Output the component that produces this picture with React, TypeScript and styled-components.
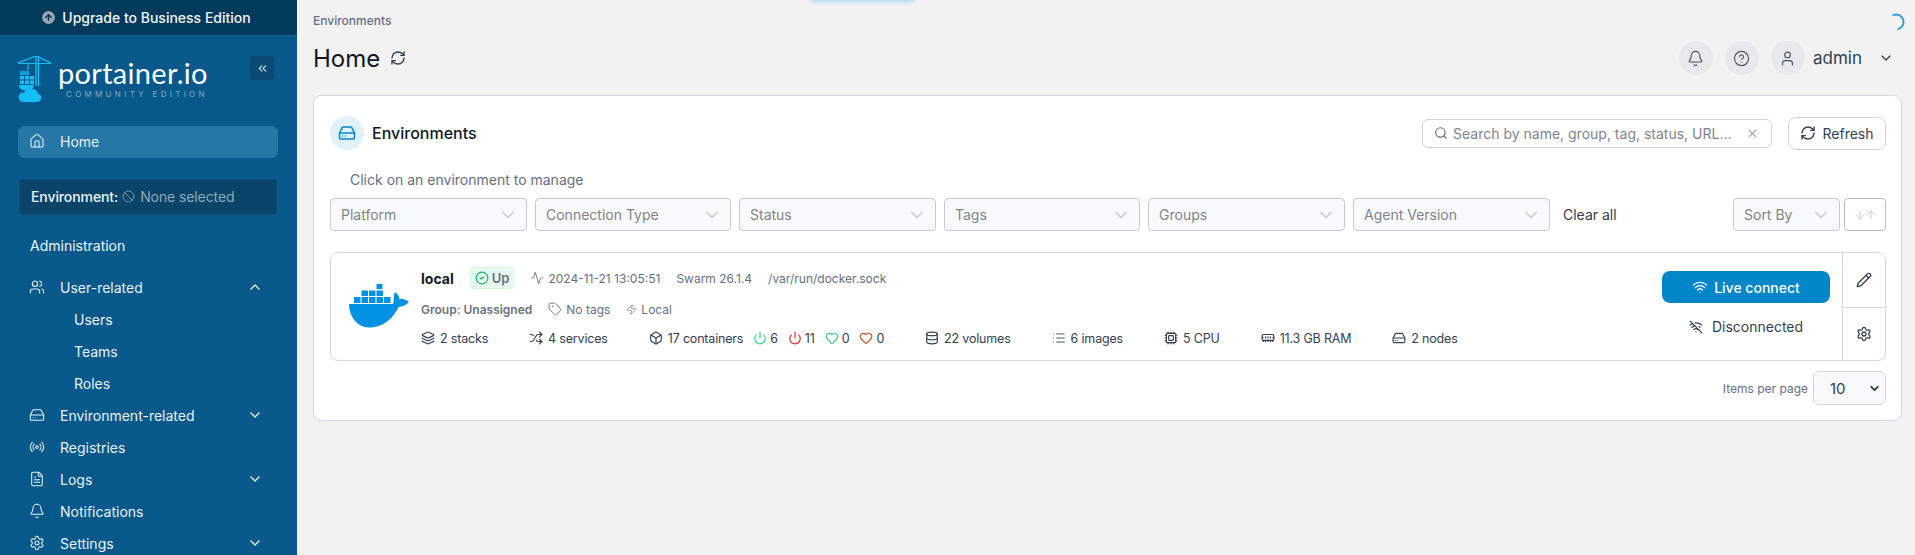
import type { FC, ReactNode } from "react";
import styled, { createGlobalStyle } from "styled-components";
import {
  Activity,
  ArrowDown,
  ArrowUp,
  ArrowUpCircle,
  Ban,
  Bell,
  Box,
  CheckCircle2,
  ChevronDown,
  ChevronUp,
  ChevronsLeft,
  Cpu,
  Database,
  FileText,
  HardDrive,
  Heart,
  HelpCircle,
  Home,
  Layers,
  List,
  MemoryStick,
  Pencil,
  Power,
  Radio,
  RefreshCw,
  Search,
  Settings,
  Shuffle,
  Tag,
  User,
  Users,
  Wifi,
  WifiOff,
  X,
  Zap,
} from "lucide-react";

const GlobalStyle = createGlobalStyle`
  html, body {
    margin: 0;
    height: 100%;
    overflow: hidden;
    background: #f2f2f2;
    font-family: Inter, "Liberation Sans", sans-serif;
    font-size: 14px;
    color: #344054;
  }
`;

const Page = styled.div`
  display: flex;
  height: 555px;
  overflow: hidden;
`;

const Sidebar = styled.aside`
  width: 297px;
  flex: none;
  height: 555px;
  overflow: hidden;
  background: #06598a;
  color: #eef5f9;
`;

const Banner = styled.div`
  height: 35px;
  display: flex;
  align-items: center;
  justify-content: center;
  gap: 5px;
  padding-right: 6px;
  background: #023a5c;
  border-bottom: 1px solid #0b6a9e;
  font-weight: 500;
  color: #f2f6f8;
`;

const LogoRow = styled.div`
  display: flex;
  justify-content: space-between;
  padding: 20px 23px 0 18px;
  height: 46px;
`;

const LogoMark = styled.div`
  display: flex;
  gap: 7px;
`;

const LogoWords = styled.div`
  display: flex;
  flex-direction: column;
  align-items: flex-start;
`;

const LogoName = styled.span`
  font-family: "Lato", sans-serif;
  font-size: 29px;
  line-height: 30px;
  margin-top: 2px;
  letter-spacing: 0.3px;
  color: #fff;
`;

const LogoEdition = styled.span`
  font-size: 8px;
  line-height: 8px;
  margin: 2px 0 0 8px;
  letter-spacing: 3.3px;
  white-space: nowrap;
  color: #8aa9bf;
`;

const CollapseButton = styled.div`
  width: 24px;
  height: 24px;
  border-radius: 3px;
  background: #0a4a73;
  display: flex;
  align-items: center;
  justify-content: center;
`;

const Nav = styled.nav`
  display: flex;
  flex-direction: column;
  padding: 24px 19px 0 18px;
`;

const NavRow = styled.div<{ $active?: boolean; $sub?: boolean }>`
  height: 32px;
  box-sizing: border-box;
  flex: none;
  display: flex;
  align-items: center;
  gap: 15px;
  padding: 0 15px 2px ${(p) => (p.$sub ? "56px" : "11px")};
  border-radius: 6px;
  background: ${(p) => (p.$active ? "#2577a5" : "transparent")};
  color: #e9f1f6;
  svg {
    flex: none;
  }
`;

const NavChevron = styled.span`
  margin-left: auto;
  display: flex;
`;

const EnvBox = styled.div`
  height: 36px;
  box-sizing: border-box;
  margin: 21px 1px 15px 1px;
  padding: 0 0 2px 11px;
  display: flex;
  align-items: center;
  gap: 4px;
  border: 1px dotted #0d5a88;
  border-radius: 3px;
  background: #0a4468;
  font-weight: 500;
  letter-spacing: -0.1px;
  color: #eef5f9;
`;

const EnvNone = styled.span`
  display: flex;
  align-items: center;
  gap: 5px;
  font-weight: 400;
  color: #8fa8ba;
`;

const SectionTitle = styled.div`
  height: 32px;
  box-sizing: border-box;
  padding: 0 0 2px 12px;
  margin-bottom: 10px;
  display: flex;
  align-items: center;
  color: #eef5f9;
`;

const Main = styled.main`
  flex: 1;
  min-width: 0;
  padding: 13px 13px 0 16px;
`;

const Breadcrumb = styled.div`
  font-size: 12px;
  line-height: 16px;
  font-weight: 500;
  color: #667085;
`;

const TitleRow = styled.div`
  height: 34px;
  margin-top: 12px;
  display: flex;
  align-items: center;
`;

const PageTitle = styled.h1`
  margin: 0 10px 0 0;
  font-size: 24px;
  font-weight: 400;
  color: #101828;
`;

const HeaderActions = styled.div`
  margin-left: auto;
  display: flex;
  align-items: center;
  gap: 12px;
`;

const RoundButton = styled.div`
  width: 34px;
  height: 34px;
  border-radius: 50%;
  background: #e8e9ec;
  display: flex;
  align-items: center;
  justify-content: center;
  color: #475467;
`;

const UserName = styled.span`
  font-size: 17px;
  margin-left: -4px;
  margin-right: 6px;
  color: #344054;
`;

const UserChevron = styled.span`
  display: flex;
  margin-right: 8px;
  margin-left: -2px;
`;

const Card = styled.section`
  margin-top: 20px;
  height: 326px;
  box-sizing: border-box;
  padding: 20px 15px 15px 16px;
  background: #fff;
  border: 1px solid #d6d6e4;
  border-radius: 8px;
`;

const CardHeader = styled.div`
  height: 34px;
  display: flex;
  align-items: center;
`;

const IconCircle = styled.div`
  width: 34px;
  height: 34px;
  border-radius: 50%;
  background: #e0f2fe;
  display: flex;
  align-items: center;
  justify-content: center;
  margin-right: 8px;
  color: #0086c9;
`;

const CardTitle = styled.h2`
  margin: 0;
  font-size: 16px;
  font-weight: 500;
  color: #101828;
`;

const SearchBox = styled.div`
  margin-left: auto;
  width: 350px;
  height: 29px;
  box-sizing: border-box;
  display: flex;
  align-items: center;
  gap: 5px;
  padding: 0 12px 0 11px;
  border: 1px solid #d0d5dd;
  border-radius: 6px;
  color: #667085;
`;

const SearchText = styled.span`
  flex: 1;
  color: #80858f;
`;

const RefreshButton = styled.div`
  width: 98px;
  height: 33px;
  box-sizing: border-box;
  margin-left: 16px;
  display: flex;
  align-items: center;
  justify-content: center;
  gap: 6px;
  border: 1px solid #d0d5dd;
  border-radius: 8px;
  color: #344054;
`;

const Hint = styled.div`
  margin: 22px 0 10px 20px;
  line-height: 16px;
  color: #667085;
`;

const FilterRow = styled.div`
  height: 33px;
  display: flex;
  align-items: center;
  gap: 8px;
`;

const Select = styled.div<{ $width: number }>`
  width: ${(p) => p.$width}px;
  height: 33px;
  box-sizing: border-box;
  display: flex;
  align-items: center;
  justify-content: space-between;
  padding: 0 8px 0 10px;
  background: #f9fafb;
  border: 1px solid #c9c9c9;
  border-radius: 4px;
  color: #7f848d;
`;

const ClearAll = styled.span`
  margin-left: 5px;
  color: #344054;
`;

const SortGroup = styled.div`
  margin-left: auto;
  display: flex;
  align-items: center;
  gap: 4px;
`;

const SortOrder = styled.div`
  width: 42px;
  height: 33px;
  box-sizing: border-box;
  display: flex;
  align-items: center;
  justify-content: center;
  background: #fff;
  border: 1px solid #b9b9b9;
  border-radius: 4px;
  color: #c8cbd2;
  svg {
    margin: 0 -1.5px;
  }
`;

const EnvItem = styled.div`
  margin-top: 21px;
  height: 109px;
  box-sizing: border-box;
  display: flex;
  border: 1px solid #d6d9e4;
  border-radius: 8px;
`;

const DockerSlot = styled.div`
  width: 60px;
  margin: 31px 12px 0 18px;
  flex: none;
`;

const EnvInfo = styled.div`
  flex: 1;
  min-width: 0;
  padding-top: 14px;
`;

const InfoTop = styled.div`
  height: 22px;
  display: flex;
  align-items: center;
  gap: 16px;
  font-size: 12px;
  color: #667085;
`;

const EnvName = styled.span`
  font-size: 14px;
  font-weight: 700;
  color: #101828;
`;

const UpBadge = styled.span`
  height: 22px;
  box-sizing: border-box;
  padding: 0 4px;
  display: flex;
  align-items: center;
  gap: 3px;
  border: 1px solid #d1fadf;
  border-radius: 3px;
  background: #e8faef;
  font-size: 13px;
  font-weight: 600;
  color: #667085;
  svg {
    color: #12b76a;
  }
`;

const Meta = styled.span`
  display: flex;
  align-items: center;
  gap: 4px;
`;

const InfoMiddle = styled.div`
  height: 16px;
  margin-top: 12px;
  display: flex;
  align-items: center;
  gap: 16px;
  font-size: 12px;
  color: #667085;
`;

const GroupLabel = styled.span`
  font-weight: 600;
  color: #6b7280;
`;

const StatRow = styled.div`
  height: 16px;
  margin-top: 13px;
  display: flex;
  align-items: center;
  gap: 41px;
  font-size: 12.5px;
  letter-spacing: -0.18px;
  color: #344054;
`;

const Stat = styled.span`
  display: flex;
  align-items: center;
  gap: 5px;
  white-space: nowrap;
`;

const Health = styled.span<{ $color: string }>`
  display: flex;
  align-items: center;
  gap: 3px;
  margin-left: 5px;
  svg {
    color: ${(p) => p.$color};
  }
`;

const ActionColumn = styled.div`
  width: 168px;
  flex: none;
  margin-right: 12px;
  padding-top: 18px;
  display: flex;
  flex-direction: column;
  align-items: center;
`;

const LiveButton = styled.div`
  width: 168px;
  height: 32px;
  display: flex;
  align-items: center;
  justify-content: center;
  gap: 6px;
  background: #0086c9;
  border-radius: 8px;
  font-weight: 500;
  color: #fff;
`;

const Disconnected = styled.div`
  margin-top: 14px;
  line-height: 20px;
  display: flex;
  align-items: center;
  gap: 9px;
  color: #344054;
`;

const SideColumn = styled.div`
  width: 42px;
  flex: none;
  display: flex;
  flex-direction: column;
  border-left: 1px solid #d6d9e4;
`;

const SideCell = styled.div<{ $top?: boolean }>`
  flex: ${(p) => (p.$top ? "0 0 54px" : "1")};
  display: flex;
  align-items: center;
  justify-content: center;
  border-bottom: ${(p) => (p.$top ? "1px solid #d6d9e4" : "none")};
  color: #344054;
`;

const Footer = styled.div`
  margin-top: 10px;
  display: flex;
  justify-content: flex-end;
  align-items: center;
  gap: 5px;
  font-size: 12px;
  color: #667085;
`;

const PageSize = styled.div`
  width: 73px;
  height: 34px;
  box-sizing: border-box;
  display: flex;
  align-items: center;
  justify-content: space-between;
  padding: 0 4px 0 16px;
  background: #f9fafb;
  border: 1px solid #d0d5dd;
  border-radius: 6px;
  font-size: 15px;
  color: #344054;
`;

const TopGlow = styled.div`
  position: absolute;
  top: -2px;
  left: 812px;
  width: 102px;
  height: 2px;
  background: #29a5e8;
  box-shadow: 0 0 5px #29a5e8;
`;

const Spinner = styled.svg`
  position: absolute;
  top: 13px;
  left: 1887px;
`;

const CraneLogo = () => (
  <svg width="33" height="46" viewBox="0 0 33 46" fill="none">
    <g stroke="#13bef9" strokeWidth="1.2">
      <path d="M0 7.5H33M18 0L0 7M18 0L33 7" />
      <path d="M18 0V30M20.5 0V30" strokeWidth="1.3" />
      <path d="M10 7.5V14" />
    </g>
    <g fill="#13bef9">
      <rect x="2" y="15" width="9" height="4" opacity="0.7" />
      <rect x="2" y="20" width="4" height="3.5" />
      <rect x="7" y="20" width="4" height="3.5" />
      <rect x="12" y="20" width="4" height="3.5" />
      <rect x="2" y="24.5" width="4" height="3.5" />
      <rect x="7" y="24.5" width="4" height="3.5" />
      <rect x="12" y="24.5" width="4" height="3.5" />
      <path d="M1 29H16L14 34H5Q1 33 1 29Z" />
      <path d="M5 46Q0 45 1 40Q2 36 6 37Q8 31 14 33Q19 33 20 38Q24 39 23 43Q22 46 18 46Z" />
    </g>
  </svg>
);

const DockerWhale = () => (
  <svg width="60" height="44" viewBox="0 0 60 44" fill="#0091e2">
    <rect x="27.5" y="0" width="6" height="5" />
    <rect x="12.5" y="6.5" width="6.5" height="5.5" />
    <rect x="20" y="6.5" width="6.5" height="5.5" />
    <rect x="27.5" y="6.5" width="6.5" height="5.5" />
    <rect x="5" y="13" width="6.5" height="6" />
    <rect x="12.5" y="13" width="6.5" height="6" />
    <rect x="20" y="13" width="6.5" height="6" />
    <rect x="27.5" y="13" width="6.5" height="6" />
    <rect x="35" y="13" width="6.5" height="6" />
    <path d="M0 20H44C45.5 17 44 12 46 8C49 10 50.5 13 50.5 15.5C53.5 14.5 57 15.5 60 18C57 21.5 53 22.5 49.5 23C45 33 35 43.5 20 43.5C8 43.5 0 32 0 20Z" />
  </svg>
);

const filters = [
  { label: "Platform", width: 197 },
  { label: "Connection Type", width: 196 },
  { label: "Status", width: 197 },
  { label: "Tags", width: 196 },
  { label: "Groups", width: 197 },
  { label: "Agent Version", width: 197 },
];

const Caret = () => <ChevronDown size={20} color="#cccccc" strokeWidth={2} />;

const NavItem: FC<{ icon: ReactNode; label: string; open?: boolean; folder?: boolean }> = ({
  icon,
  label,
  open,
  folder,
}) => (
  <NavRow>
    {icon}
    {label}
    {folder && (
      <NavChevron>
        {open ? <ChevronUp size={16} /> : <ChevronDown size={16} />}
      </NavChevron>
    )}
  </NavRow>
);

const App = () => {
  return (
    <Page>
      <GlobalStyle />
      <Sidebar>
        <Banner>
          <ArrowUpCircle size={17} fill="#9aa5b1" color="#023a5c" />
          Upgrade to Business Edition
        </Banner>
        <LogoRow>
          <LogoMark>
            <CraneLogo />
            <LogoWords>
              <LogoName>portainer.io</LogoName>
              <LogoEdition>COMMUNITY EDITION</LogoEdition>
            </LogoWords>
          </LogoMark>
          <CollapseButton>
            <ChevronsLeft size={13} color="#cfdde6" />
          </CollapseButton>
        </LogoRow>
        <Nav>
          <NavRow $active>
            <Home size={16} strokeWidth={1.6} />
            Home
          </NavRow>
          <EnvBox>
            Environment:
            <EnvNone>
              <Ban size={13} strokeWidth={1.5} />
              None selected
            </EnvNone>
          </EnvBox>
          <SectionTitle>Administration</SectionTitle>
          <NavItem icon={<Users size={16} strokeWidth={1.6} />} label="User-related" folder open />
          <NavRow $sub>Users</NavRow>
          <NavRow $sub>Teams</NavRow>
          <NavRow $sub>Roles</NavRow>
          <NavItem icon={<HardDrive size={16} strokeWidth={1.6} />} label="Environment-related" folder />
          <NavItem icon={<Radio size={16} strokeWidth={1.6} />} label="Registries" />
          <NavItem icon={<FileText size={16} strokeWidth={1.6} />} label="Logs" folder />
          <NavItem icon={<Bell size={16} strokeWidth={1.6} />} label="Notifications" />
          <NavItem icon={<Settings size={16} strokeWidth={1.6} />} label="Settings" folder />
        </Nav>
      </Sidebar>
      <Main>
        <Breadcrumb>Environments</Breadcrumb>
        <TitleRow>
          <PageTitle>Home</PageTitle>
          <RefreshCw size={16} color="#344054" />
          <HeaderActions>
            <RoundButton>
              <Bell size={17} strokeWidth={1.6} />
            </RoundButton>
            <RoundButton>
              <HelpCircle size={17} strokeWidth={1.6} />
            </RoundButton>
            <RoundButton>
              <User size={17} strokeWidth={1.6} />
            </RoundButton>
            <UserName>admin</UserName>
            <UserChevron>
              <ChevronDown size={16} color="#344054" />
            </UserChevron>
          </HeaderActions>
        </TitleRow>
        <Card>
          <CardHeader>
            <IconCircle>
              <HardDrive size={18} />
            </IconCircle>
            <CardTitle>Environments</CardTitle>
            <SearchBox>
              <Search size={14} />
              <SearchText>Search by name, group, tag, status, URL...</SearchText>
              <X size={13} color="#a0a5ae" />
            </SearchBox>
            <RefreshButton>
              <RefreshCw size={16} />
              Refresh
            </RefreshButton>
          </CardHeader>
          <Hint>Click on an environment to manage</Hint>
          <FilterRow>
            {filters.map((f) => (
              <Select key={f.label} $width={f.width}>
                {f.label}
                <Caret />
              </Select>
            ))}
            <ClearAll>Clear all</ClearAll>
            <SortGroup>
              <Select $width={107}>
                Sort By
                <Caret />
              </Select>
              <SortOrder>
                <ArrowDown size={14} strokeWidth={1.6} />
                <ArrowUp size={14} strokeWidth={1.6} />
              </SortOrder>
            </SortGroup>
          </FilterRow>
          <EnvItem>
            <DockerSlot>
              <DockerWhale />
            </DockerSlot>
            <EnvInfo>
              <InfoTop>
                <EnvName>local</EnvName>
                <UpBadge>
                  <CheckCircle2 size={14} />
                  Up
                </UpBadge>
                <Meta>
                  <Activity size={14} strokeWidth={1.5} />
                  2024-11-21 13:05:51
                </Meta>
                <span>Swarm 26.1.4</span>
                <span>/var/run/docker.sock</span>
              </InfoTop>
              <InfoMiddle>
                <GroupLabel>Group: Unassigned</GroupLabel>
                <Meta>
                  <Tag size={14} strokeWidth={1.5} />
                  No tags
                </Meta>
                <Meta>
                  <Zap size={11} strokeWidth={1.5} />
                  Local
                </Meta>
              </InfoMiddle>
              <StatRow>
                <Stat>
                  <Layers size={14} />2 stacks
                </Stat>
                <Stat>
                  <Shuffle size={14} />4 services
                </Stat>
                <Stat>
                  <Box size={14} />17 containers
                  <Health $color="#32d583">
                    <Power size={14} />6
                  </Health>
                  <Health $color="#d03028">
                    <Power size={14} />11
                  </Health>
                  <Health $color="#32d583">
                    <Heart size={14} />0
                  </Health>
                  <Health $color="#c4511f">
                    <Heart size={14} />0
                  </Health>
                </Stat>
                <Stat>
                  <Database size={14} />22 volumes
                </Stat>
                <Stat>
                  <List size={14} strokeWidth={1.5} />6 images
                </Stat>
                <Stat>
                  <Cpu size={14} />5 CPU
                </Stat>
                <Stat>
                  <MemoryStick size={14} />11.3 GB RAM
                </Stat>
                <Stat>
                  <HardDrive size={14} />2 nodes
                </Stat>
              </StatRow>
            </EnvInfo>
            <ActionColumn>
              <LiveButton>
                <Wifi size={16} />
                Live connect
              </LiveButton>
              <Disconnected>
                <WifiOff size={14} />
                Disconnected
              </Disconnected>
            </ActionColumn>
            <SideColumn>
              <SideCell $top>
                <Pencil size={16} />
              </SideCell>
              <SideCell>
                <Settings size={16} />
              </SideCell>
            </SideColumn>
          </EnvItem>
          <Footer>
            Items per page
            <PageSize>
              10
              <ChevronDown size={13} strokeWidth={3.5} color="#344054" />
            </PageSize>
          </Footer>
        </Card>
      </Main>
      <TopGlow />
      <Spinner width="18" height="18" viewBox="0 0 18 18" fill="none">
        <path d="M9 1.5A7.5 7.5 0 0 1 9 16.5" transform="rotate(-20 9 9)" stroke="#2fa0e0" strokeWidth="2" strokeLinecap="round" />
      </Spinner>
    </Page>
  );
};

export default App;
